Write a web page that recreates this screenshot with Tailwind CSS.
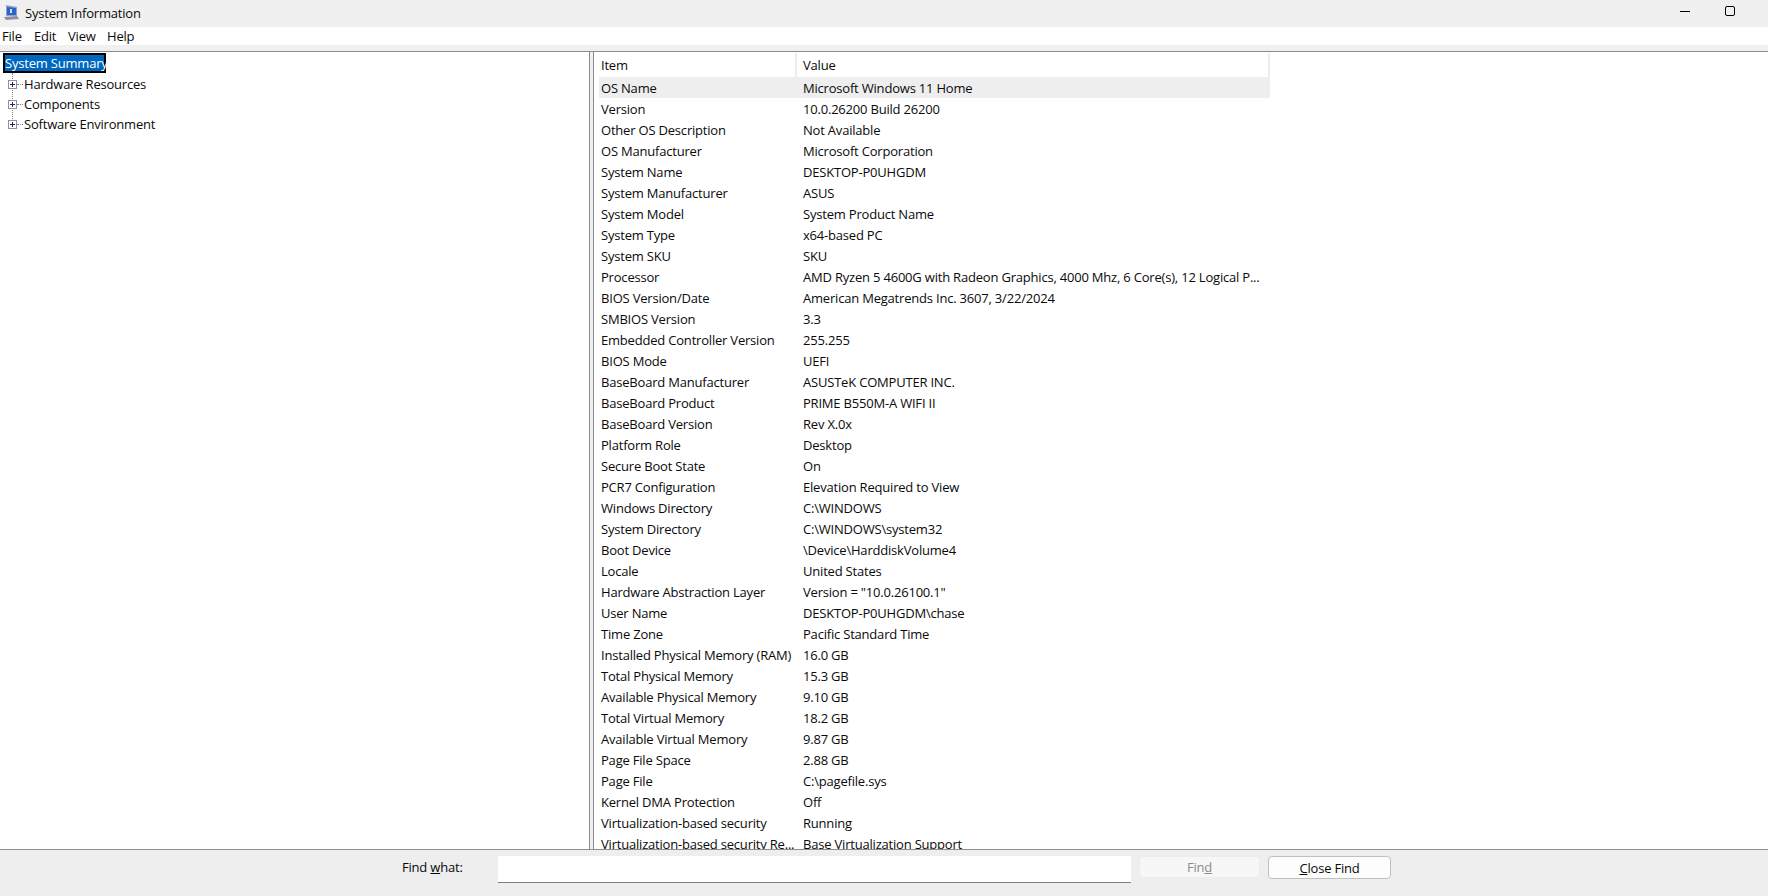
<!DOCTYPE html>
<html lang="en">
<head>
<meta charset="UTF-8">
<title>System Information</title>
<script src="https://cdn.jsdelivr.net/npm/@tailwindcss/browser@4"></script>
</head>
<body class="h-[896px] w-[1768px] overflow-hidden bg-white text-[13px] leading-[18px] text-[#0a0a0a] flex flex-col font-['Open_Sans',sans-serif] tracking-[-0.2px]">

<!-- title bar -->
<div class="h-[27px] shrink-0 bg-[#f0f0f0] flex items-center relative">
  <svg class="ml-[3px] w-[17px] h-[17px] -mt-[3px]" viewBox="0 0 17 17">
    <path d="M3 1 L14 3 L14 12 L3 12 Z" fill="#8fa3c9"/>
    <path d="M4 3 L13 4 L13 11 L4 11 Z" fill="#2f62c8"/>
    <path d="M7 5 h2 v4 h-2 Z" fill="#cfe0fa"/>
    <path d="M1 13 L14 12 L16 15 L3 16 Z" fill="#8b8fa3"/>
  </svg>
  <span class="ml-[5px] -mt-[2px]">System Information</span>
  <div class="absolute left-[1680px] top-[11px] w-[10px] h-px bg-black"></div>
  <div class="absolute left-[1725px] top-[6px] w-[10px] h-[10px] border border-black rounded-[2px]"></div>
</div>

<!-- menu -->
<div class="h-[18px] shrink-0 bg-white flex items-center">
  <span class="ml-[2px] w-[32px]">File</span>
  <span class="w-[34px]">Edit</span>
  <span class="w-[39px]">View</span>
  <span>Help</span>
</div>
<div class="h-[7px] shrink-0 bg-[#f0f0f0] border-b border-[#8a8a90]"></div>

<!-- panes -->
<div class="h-[798px] shrink-0 flex bg-[#f0f0f0] border-b border-[#8a8f96]">
  <!-- tree -->
  <div class="w-[590px] shrink-0 bg-white border-r border-[#8a8a90] pl-[3px] pt-px">
    <div class="w-[103px] h-[20px] bg-[#0067c0] border-2 border-black text-white flex items-center whitespace-nowrap">System Summary</div>
    <div class="relative">
      <div class="absolute left-[9px] -top-px h-[54px] border-l border-dotted border-[#808080]"></div>
      <div class="h-[20px] mt-px flex items-center relative">
        <div class="ml-[5px] w-[9px] h-[9px] border border-[#8f8f9f] bg-white flex items-center justify-center relative">
          <div class="absolute w-[5px] h-px bg-[#1f2a55]"></div>
          <div class="absolute w-px h-[5px] bg-[#1f2a55]"></div>
        </div>
        <div class="w-[6px] border-t border-dotted border-[#808080]"></div>
        <span class="ml-px">Hardware Resources</span>
      </div>
      <div class="h-[20px] flex items-center relative">
        <div class="ml-[5px] w-[9px] h-[9px] border border-[#8f8f9f] bg-white flex items-center justify-center relative">
          <div class="absolute w-[5px] h-px bg-[#1f2a55]"></div>
          <div class="absolute w-px h-[5px] bg-[#1f2a55]"></div>
        </div>
        <div class="w-[6px] border-t border-dotted border-[#808080]"></div>
        <span class="ml-px">Components</span>
      </div>
      <div class="h-[20px] flex items-center relative">
        <div class="ml-[5px] w-[9px] h-[9px] border border-[#8f8f9f] bg-white flex items-center justify-center relative">
          <div class="absolute w-[5px] h-px bg-[#1f2a55]"></div>
          <div class="absolute w-px h-[5px] bg-[#1f2a55]"></div>
        </div>
        <div class="w-[6px] border-t border-dotted border-[#808080]"></div>
        <span class="ml-px">Software Environment</span>
      </div>
    </div>
  </div>

  <!-- details -->
  <div class="ml-[3px] flex-1 bg-white border-l border-[#8a8a90] overflow-hidden pl-[5px]">
    <div class="w-[671px]">
      <div class="h-[25px] flex items-center relative">
        <span class="pl-[2px] w-[196px]">Item</span>
        <span class="pl-[6px] border-l-2 border-[#ececec] h-[24px] mt-px flex items-center w-[475px] border-r-2">Value</span>
      </div>
      <div id="rows" class="grid grid-cols-[202px_469px] auto-rows-[21px] items-center whitespace-nowrap [&>*]:pl-[2px]">
        <div class="bg-[#eeeeee] h-[21px] flex items-center">OS Name</div><div class="bg-[#eeeeee] h-[21px] flex items-center">Microsoft Windows 11 Home</div>
        <div>Version</div><div>10.0.26200 Build 26200</div>
        <div>Other OS Description</div><div>Not Available</div>
        <div>OS Manufacturer</div><div>Microsoft Corporation</div>
        <div>System Name</div><div>DESKTOP-P0UHGDM</div>
        <div>System Manufacturer</div><div>ASUS</div>
        <div>System Model</div><div>System Product Name</div>
        <div>System Type</div><div>x64-based PC</div>
        <div>System SKU</div><div>SKU</div>
        <div>Processor</div><div>AMD Ryzen 5 4600G with Radeon Graphics, 4000 Mhz, 6 Core(s), 12 Logical P...</div>
        <div>BIOS Version/Date</div><div>American Megatrends Inc. 3607, 3/22/2024</div>
        <div>SMBIOS Version</div><div>3.3</div>
        <div>Embedded Controller Version</div><div>255.255</div>
        <div>BIOS Mode</div><div>UEFI</div>
        <div>BaseBoard Manufacturer</div><div>ASUSTeK COMPUTER INC.</div>
        <div>BaseBoard Product</div><div>PRIME B550M-A WIFI II</div>
        <div>BaseBoard Version</div><div>Rev X.0x</div>
        <div>Platform Role</div><div>Desktop</div>
        <div>Secure Boot State</div><div>On</div>
        <div>PCR7 Configuration</div><div>Elevation Required to View</div>
        <div>Windows Directory</div><div>C:\WINDOWS</div>
        <div>System Directory</div><div>C:\WINDOWS\system32</div>
        <div>Boot Device</div><div>\Device\HarddiskVolume4</div>
        <div>Locale</div><div>United States</div>
        <div>Hardware Abstraction Layer</div><div>Version = "10.0.26100.1"</div>
        <div>User Name</div><div>DESKTOP-P0UHGDM\chase</div>
        <div>Time Zone</div><div>Pacific Standard Time</div>
        <div>Installed Physical Memory (RAM)</div><div>16.0 GB</div>
        <div>Total Physical Memory</div><div>15.3 GB</div>
        <div>Available Physical Memory</div><div>9.10 GB</div>
        <div>Total Virtual Memory</div><div>18.2 GB</div>
        <div>Available Virtual Memory</div><div>9.87 GB</div>
        <div>Page File Space</div><div>2.88 GB</div>
        <div>Page File</div><div>C:\pagefile.sys</div>
        <div>Kernel DMA Protection</div><div>Off</div>
        <div>Virtualization-based security</div><div>Running</div>
        <div>Virtualization-based security Re...</div><div>Base Virtualization Support</div>
      </div>
    </div>
  </div>
</div>

<!-- find bar -->
<div class="flex-1 bg-[#eeeeee] flex items-start">
  <span class="ml-[402px] mt-[8px] w-[96px]">Find <span class="underline">w</span>hat:</span>
  <div class="mt-[6px] w-[633px] h-[27px] bg-white border-b border-[#808080]"></div>
  <div class="ml-[8px] mt-[6px] w-[121px] h-[22px] rounded-[4px] bg-[#f7f7f7] border border-[#ececec] text-[#8c8c8c] flex items-center justify-center">Fin<span class="underline">d</span></div>
  <div class="ml-[8px] mt-[6px] w-[123px] h-[23px] rounded-[4px] bg-[#fdfdfd] border border-[#c0c0c0] flex items-center justify-center"><span class="underline">C</span>lose Find</div>
</div>
</body>
</html>
